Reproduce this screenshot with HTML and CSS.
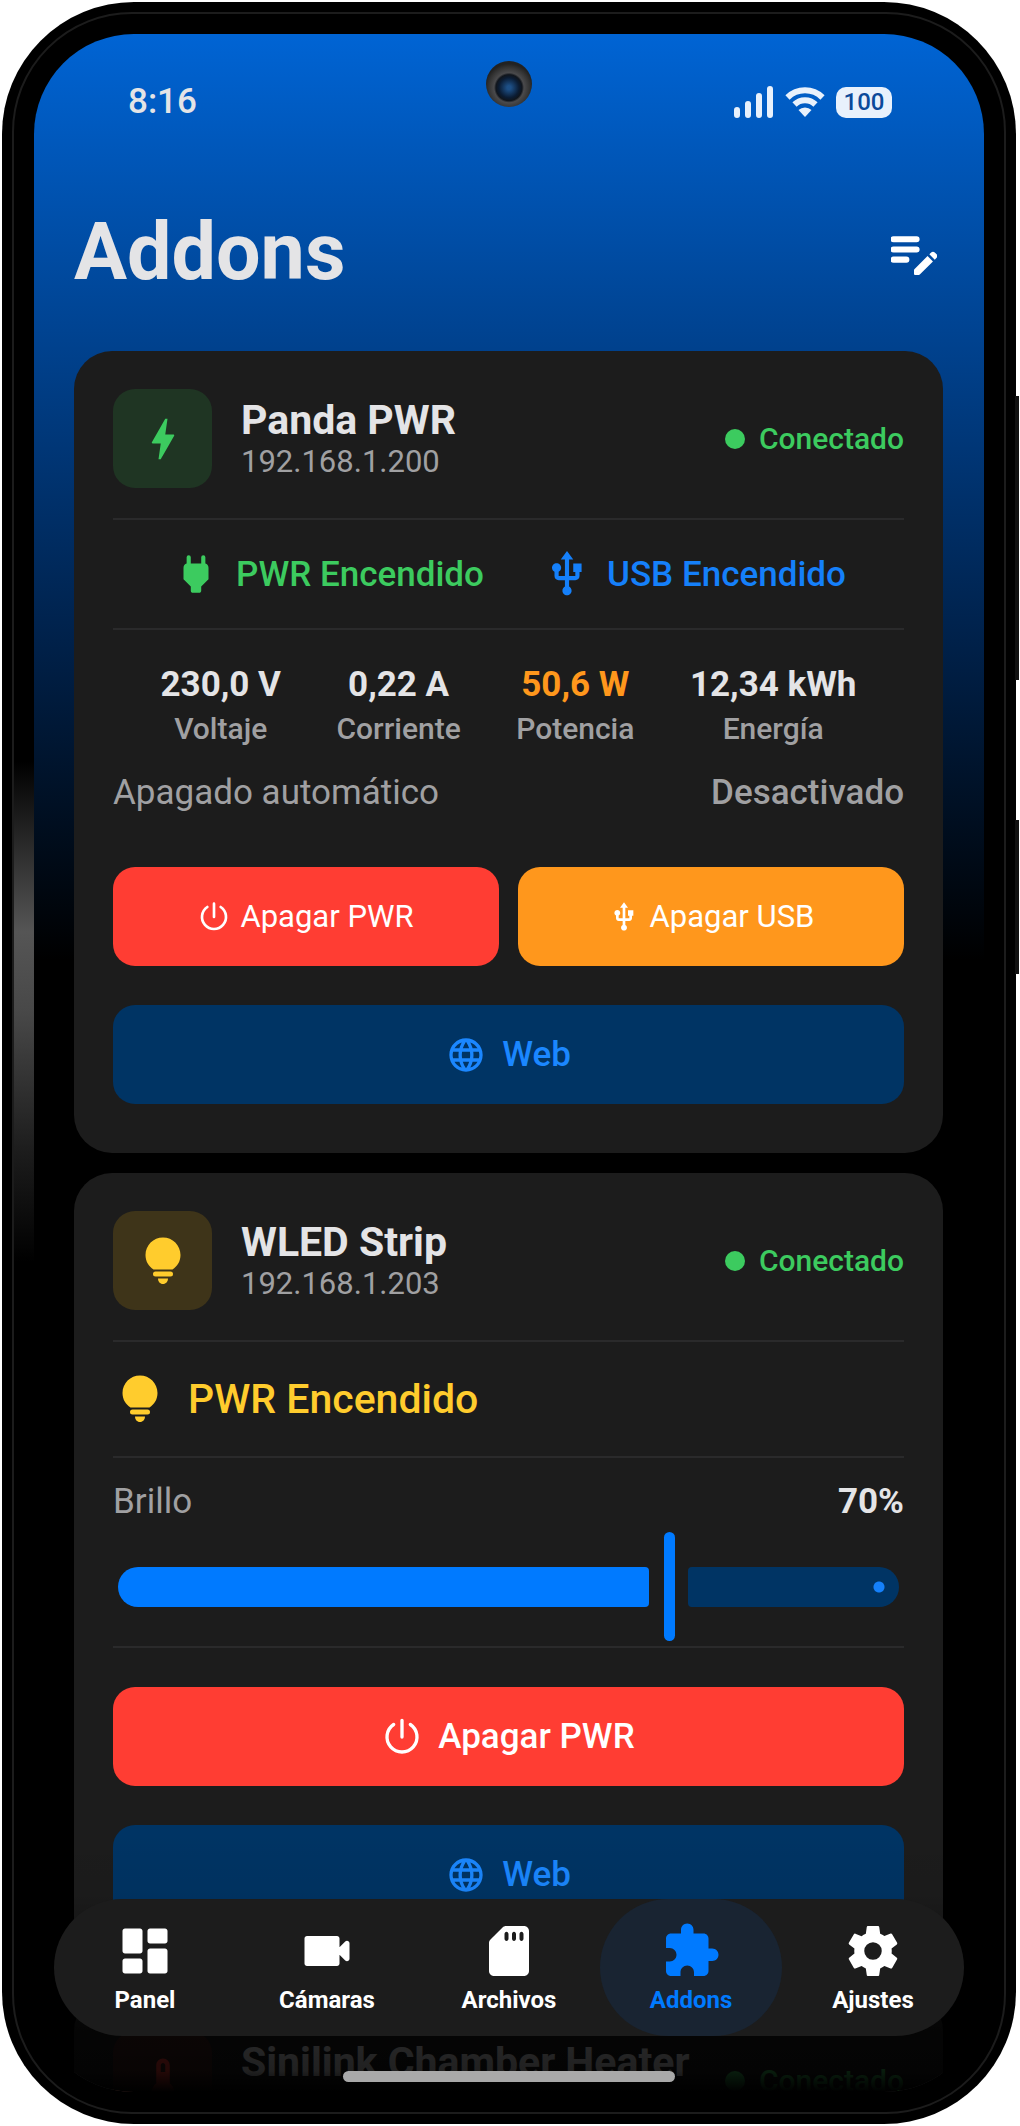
FILE: index.html
```html
<!DOCTYPE html>
<html lang="es">
<head>
  <meta charset="UTF-8" />
  <meta name="viewport" content="width=device-width, initial-scale=1.0"/>
  <title>Addons</title>
  <link rel="stylesheet" href="styles.css">
</head>
<body>
  <!-- shared icons -->
  <svg class="sprite" aria-hidden="true">
    <symbol id="i-usb" viewBox="0 0 24 24"><path d="M15 7v4h1v2h-3V5h2l-3-4-3 4h2v8H8v-2.070c.7-.37 1.200-1.080 1.200-1.930 0-1.210-.99-2.200-2.200-2.200-1.210 0-2.200.99-2.200 2.200 0 .85.5 1.560 1.200 1.930V13c0 1.110.89 2 2 2h3v3.050c-.71.37-1.200 1.100-1.200 1.950 0 1.220.99 2.200 2.200 2.200 1.210 0 2.200-.98 2.200-2.200 0-.85-.49-1.580-1.200-1.950V15h3c1.110 0 2-.89 2-2v-2h1V7z"/></symbol>
    <symbol id="i-power" viewBox="0 0 24 24"><path d="M12 2v10M7 4.500a9 9 0 1 0 10 0" fill="none" stroke="currentColor" stroke-width="2" stroke-linecap="round"/></symbol>
    <symbol id="i-web" viewBox="0 0 24 24"><path d="M11.990 2C6.470 2 2 6.480 2 12s4.470 10 9.990 10C17.520 22 22 17.520 22 12S17.520 2 11.990 2zm6.930 6h-2.950c-.32-1.250-.78-2.450-1.380-3.560 1.840.63 3.370 1.910 4.330 3.560zM12 4.040c.83 1.200 1.480 2.530 1.910 3.960h-3.820c.43-1.430 1.080-2.760 1.910-3.960zM4.260 14C4.100 13.360 4 12.690 4 12s.1-1.360.26-2h3.380c-.08.66-.14 1.320-.14 2 0 .68.06 1.340.14 2H4.260zm.82 2h2.950c.32 1.250.78 2.450 1.380 3.560-1.840-.63-3.370-1.900-4.330-3.560zm2.950-8H5.080c.96-1.660 2.490-2.930 4.330-3.560C8.810 5.550 8.350 6.750 8.030 8zM12 19.960c-.83-1.200-1.480-2.530-1.910-3.960h3.820c-.43 1.430-1.080 2.760-1.910 3.960zM14.340 14H9.660c-.09-.66-.16-1.320-.16-2 0-.68.07-1.350.16-2h4.680c.09.65.16 1.320.16 2 0 .68-.07 1.340-.16 2zm.25 5.560c.6-1.110 1.060-2.310 1.380-3.560h2.950c-.96 1.650-2.490 2.930-4.330 3.560zM16.360 14c.08-.66.14-1.320.14-2 0-.68-.06-1.340-.14-2h3.380c.16.64.26 1.310.26 2s-.1 1.360-.26 2h-3.380z"/></symbol>
    <symbol id="i-bulb" viewBox="0 0 36 48"><path d="M18 .5C8.400.5.500 8.300.500 18c0 6.500 3.300 11.400 8 14.500h19c4.700-3.100 8-8 8-14.500C35.500 8.300 27.600.5 18 .5zM10.500 34.500h15a2.500 2.500 0 0 1 0 5h-15a2.500 2.500 0 0 1 0-5zM13 41.500h10c0 3-2 5.500-5 5.500s-5-2.500-5-5.500z"/></symbol>
  </svg>

  <div class="phone">
    <div class="screen">
      <div class="status-bar">
        <span>8:16</span>
        <span class="camera"></span>
        <div class="status-icons">
          <svg width="40" height="32" viewBox="0 0 40 32"><path d="M3 24v5M14 18v11M25 10v19M36 3v26" stroke="currentColor" stroke-width="6" stroke-linecap="round"/></svg>
          <svg width="42" height="32" viewBox="0 0 42 32"><path d="M3.500 11.500a25 25 0 0 1 35 0M10.500 18.500a15 15 0 0 1 21 0" fill="none" stroke="currentColor" stroke-width="6"/><path d="M21 31l-6.500-7a9.500 9.500 0 0 1 13 0z"/></svg>
          <span class="battery">100</span>
        </div>
      </div>

      <header>
        <h1>Addons</h1>
        <button class="edit-btn" aria-label="Editar">
          <svg viewBox="3 3 18 18"><path d="M4 9.800h9a1.200 1.200 0 0 1 0 2.400H4a1.200 1.200 0 0 1 0-2.400zM4 5.800h9a1.200 1.200 0 0 1 0 2.400H4a1.200 1.200 0 0 1 0-2.400zM4 13.800h5a1.200 1.200 0 0 1 0 2.400H4a1.200 1.200 0 0 1 0-2.400zM18.010 12.870l.71-.71c.39-.39 1.020-.39 1.410 0l.71.71c.39.39.39 1.020 0 1.410l-.71.71-2.120-2.120zM17.300 13.580l-5.150 5.150a.5.5 0 0 0-.15.36v1.410c0 .28.22.5.5.5h1.410c.13 0 .26-.05.35-.15l5.160-5.150-2.120-2.120z"/></svg>
        </button>
      </header>

      <main>
        <section class="card">
          <div class="device">
            <div class="tile green">
              <svg width="54" height="54" viewBox="0 0 24 24"><path d="M11 21h-1l1-7H7.500c-.58 0-.57-.32-.38-.66.19-.34.05-.08.07-.12C8.480 10.940 10.420 7.540 13 3h1l-1 7h3.500c.49 0 .56.33.47.51l-.07.15C12.960 17.550 11 21 11 21z"/></svg>
            </div>
            <div class="device-info">
              <h2>Panda PWR</h2>
              <div class="ip">192.168.1.200</div>
            </div>
            <div class="state">Conectado</div>
          </div>
          <div class="power-row">
            <div class="power-item on">
              <svg viewBox="0 0 24 24"><path d="M16.500 7V4a1 1 0 0 0-2 0v3h-5V4a1 1 0 0 0-2 0v3C6.600 7.200 6 8 6 9v5.500L9.500 18v2c0 .6.400 1 1 1h3c.6 0 1-.4 1-1v-2l3.500-3.500V9c0-1-.6-1.800-1.500-2z"/></svg>
              PWR Encendido
            </div>
            <div class="power-item usb">
              <svg><use href="#i-usb"/></svg>
              USB Encendido
            </div>
          </div>
          <div class="stats">
            <div class="stat"><div class="value">230,0 V</div><div class="name">Voltaje</div></div>
            <div class="stat"><div class="value">0,22 A</div><div class="name">Corriente</div></div>
            <div class="stat"><div class="value orange">50,6 W</div><div class="name">Potencia</div></div>
            <div class="stat"><div class="value">12,34 kWh</div><div class="name">Energía</div></div>
          </div>
          <div class="auto-off">
            <span>Apagado automático</span>
            <strong>Desactivado</strong>
          </div>
          <div class="buttons">
            <button class="btn small red"><svg><use href="#i-power"/></svg>Apagar PWR</button>
            <button class="btn small amber"><svg><use href="#i-usb"/></svg>Apagar USB</button>
          </div>
          <button class="btn blue"><svg><use href="#i-web"/></svg>Web</button>
        </section>

        <section class="card">
          <div class="device">
            <div class="tile yellow">
              <svg width="36" height="48"><use href="#i-bulb"/></svg>
            </div>
            <div class="device-info">
              <h2>WLED Strip</h2>
              <div class="ip">192.168.1.203</div>
            </div>
            <div class="state">Conectado</div>
          </div>
          <div class="light-row">
            <svg width="54" height="48"><use href="#i-bulb"/></svg>
            PWR Encendido
          </div>
          <div class="brightness">
            <div class="brightness-label">
              <label for="brillo">Brillo</label>
              <output for="brillo">70%</output>
            </div>
            <div class="slider" style="--level: 70.6%">
              <div class="track"><span class="fill"></span><span class="rest"></span></div>
              <input type="range" id="brillo" min="0" max="255" value="180">
            </div>
          </div>
          <button class="btn red"><svg><use href="#i-power"/></svg>Apagar PWR</button>
          <button class="btn blue"><svg><use href="#i-web"/></svg>Web</button>
        </section>

        <section class="card">
          <div class="device">
            <div class="tile heat">
              <svg width="54" height="54" viewBox="0 0 24 24"><path d="M15 13V5c0-1.660-1.340-3-3-3S9 3.340 9 5v8c-1.210.91-2 2.370-2 4 0 2.760 2.240 5 5 5s5-2.240 5-5c0-1.630-.79-3.090-2-4zm-4-8c0-.55.45-1 1-1s1 .45 1 1v3h-2V5z"/></svg>
            </div>
            <div class="device-info">
              <h2>Sinilink Chamber Heater</h2>
            </div>
            <div class="state">Conectado</div>
          </div>
        </section>
      </main>

      <div class="fade"></div>
      <nav>
        <a href="#panel">
          <svg viewBox="0 0 24 24"><path d="M4 13h6c.55 0 1-.45 1-1V4c0-.55-.45-1-1-1H4c-.55 0-1 .45-1 1v8c0 .55.45 1 1 1zm0 8h6c.55 0 1-.45 1-1v-4c0-.55-.45-1-1-1H4c-.55 0-1 .45-1 1v4c0 .55.45 1 1 1zm10 0h6c.55 0 1-.45 1-1v-8c0-.55-.45-1-1-1h-6c-.55 0-1 .45-1 1v8c0 .55.45 1 1 1zM13 4v4c0 .55.45 1 1 1h6c.55 0 1-.45 1-1V4c0-.55-.45-1-1-1h-6c-.55 0-1 .45-1 1z"/></svg>
          Panel
        </a>
        <a href="#camaras">
          <svg viewBox="0 0 24 24"><path d="M17 10.500V7c0-.55-.45-1-1-1H4c-.55 0-1 .45-1 1v10c0 .55.45 1 1 1h12c.55 0 1-.45 1-1v-3.500l2.290 2.290c.63.63 1.710.18 1.710-.71V8.910c0-.89-1.080-1.340-1.710-.71L17 10.500z"/></svg>
          Cámaras
        </a>
        <a href="#archivos">
          <svg viewBox="0 0 24 24"><path fill-rule="evenodd" d="M18 2h-7.170c-.53 0-1.040.21-1.420.59L4.600 7.420c-.37.37-.6.88-.6 1.400V20c0 1.100.9 2 2 2h12c1.100 0 2-.9 2-2V4c0-1.100-.9-2-2-2zM11 8c-.45 0-.8-.45-.8-1V5.300c0-.55.35-1 .8-1s.8.45.8 1V7c0 .55-.35 1-.8 1zm3 0c-.45 0-.8-.45-.8-1V5.300c0-.55.35-1 .8-1s.8.45.8 1V7c0 .55-.35 1-.8 1zm3 0c-.45 0-.8-.45-.8-1V5.300c0-.55.35-1 .8-1s.8.45.8 1V7c0 .55-.35 1-.8 1z"/></svg>
          Archivos
        </a>
        <a href="#addons" class="active" aria-current="page">
          <svg viewBox="0 0 24 24"><path d="M20.500 11H19V7c0-1.100-.9-2-2-2h-4V3.500C13 2.120 11.880 1 10.500 1S8 2.120 8 3.500V5H4c-1.100 0-1.990.9-1.990 2v3.800H3.500c1.490 0 2.700 1.210 2.700 2.700s-1.210 2.700-2.700 2.700H2V20c0 1.100.9 2 2 2h3.800v-1.500c0-1.490 1.210-2.700 2.700-2.700 1.490 0 2.700 1.210 2.700 2.700V22H17c1.100 0 2-.9 2-2v-4h1.500c1.380 0 2.500-1.120 2.500-2.500S21.880 11 20.500 11z"/></svg>
          Addons
        </a>
        <a href="#ajustes">
          <svg viewBox="0 0 24 24"><path d="M19.500 12c0-.34-.03-.68-.07-1l2.110-1.650c.19-.15.24-.42.12-.64l-2-3.460c-.12-.22-.39-.3-.61-.22l-2.490 1a7.300 7.300 0 0 0-1.690-.98l-.38-2.650A.49.49 0 0 0 14 2h-4c-.25 0-.46.18-.49.42l-.38 2.650c-.61.25-1.170.59-1.690.98l-2.490-1c-.23-.09-.49 0-.61.22l-2 3.460c-.13.22-.07.49.12.64L4.570 11a7.900 7.900 0 0 0 0 2l-2.110 1.650c-.19.15-.24.42-.12.64l2 3.460c.12.22.39.3.61.22l2.490-1c.52.4 1.080.73 1.690.98l.38 2.650c.03.24.24.42.49.42h4c.25 0 .46-.18.49-.42l.38-2.650c.61-.25 1.170-.59 1.690-.98l2.490 1c.23.09.49 0 .61-.22l2-3.460c.12-.22.07-.49-.12-.64L19.430 13c.04-.32.07-.66.07-1zM12 15.500a3.500 3.500 0 1 1 0-7 3.500 3.500 0 0 1 0 7z"/></svg>
          Ajustes
        </a>
      </nav>
      <div class="home-bar"></div>
    </div>
  </div>
</body>
</html>
```
FILE: styles.css
```css
* {
  margin: 0;
  padding: 0;
  box-sizing: border-box;
}

body {
  font-family: Roboto, 'Liberation Sans', sans-serif;
  background: #fff;
  color: #e4e4e6;
  height: 100vh;
  padding: 2px 4px 2px 2px;
}

svg {
  fill: currentColor;
  flex-shrink: 0;
}

button {
  font-family: inherit;
  border: none;
  background: none;
  color: inherit;
  cursor: pointer;
}

.sprite {
  position: absolute;
  width: 0;
  height: 0;
}

/* phone body */
.phone {
  position: relative;
  height: 100%;
  padding: 32px;
  background: #000;
  border-radius: 132px;
}

/* metal rim */
.phone::before {
  content: "";
  position: absolute;
  inset: 10px;
  border: 2px solid #1c1c1c;
  border-radius: 120px;
}

/* side buttons and edge reflection */
.phone::after {
  content: "";
  position: absolute;
  top: 394px;
  right: -3px;
  width: 4px;
  height: 578px;
  background: linear-gradient(#111 0 284px, transparent 284px 424px, #111 424px);
}

.screen::before {
  content: "";
  position: absolute;
  left: 12px;
  top: 760px;
  width: 20px;
  height: 500px;
  background: linear-gradient(#000, #555 34%, #484848 50%, #1c1c1c 78%, #000);
}

.screen {
  height: 100%;
  overflow: hidden;
  border-radius: 100px;
  background: linear-gradient(#0064d4, #00428f 306px, #00214a 606px, #000 926px);
}

.status-bar {
  display: flex;
  justify-content: space-between;
  align-items: center;
  padding: 46px 92px 0 94px;
  font-size: 35px;
  font-weight: 500;
  line-height: 44px;
}

.camera {
  position: absolute;
  top: 59px;
  left: 50%;
  width: 46px;
  height: 46px;
  margin-left: -23px;
  border-radius: 50%;
  background: radial-gradient(circle at 50% 58%, #1d4f86 0 2px, #0b1c33 10px, #10151c 13px, #4a4a4c 15px, #353535 20px, #222 24px);
}

.status-icons {
  display: flex;
  align-items: center;
  gap: 10px;
  color: #e8f1fc;
}

.battery {
  width: 56px;
  height: 31px;
  border-radius: 10px;
  background: #e8f1fc;
  color: #0b4a9a;
  font-size: 24px;
  line-height: 31px;
  text-align: center;
}

header {
  display: flex;
  justify-content: space-between;
  align-items: center;
  padding: 81px 47px 52px 40px;
}

h1 {
  font-size: 79px;
  line-height: 94px;
  font-weight: 700;
}

.edit-btn {
  color: #fff;
}

.edit-btn svg {
  display: block;
  width: 46px;
  height: 46px;
}

main {
  display: grid;
  gap: 20px;
  padding: 0 41px 0 40px;
}

.card {
  background: #1c1c1c;
  border-radius: 38px;
  padding: 38px 39px 49px;
}

.device {
  display: flex;
  align-items: center;
  padding-bottom: 30px;
  border-bottom: 2px solid #2a2a2b;
}

.tile {
  display: flex;
  justify-content: center;
  align-items: center;
  width: 99px;
  height: 99px;
  border-radius: 22px;
}

.tile.green {
  background: #1f3523;
  color: #3ccb5f;
}

.tile.yellow {
  background: #3e3419;
  color: #ffcc2d;
}

.tile.heat {
  background: #3d201d;
  color: #ff3d33;
}

.device-info {
  min-height: 84px;
  margin-left: 29px;
}

h2 {
  font-size: 41px;
  line-height: 46px;
  font-weight: 700;
}

.ip {
  font-size: 31px;
  line-height: 38px;
  color: #a0a0a2;
}

.state {
  display: flex;
  align-items: center;
  gap: 14px;
  margin-left: auto;
  font-size: 30px;
  font-weight: 500;
  color: #3ccb5f;
}

.state::before {
  content: "";
  width: 20px;
  height: 20px;
  border-radius: 50%;
  background: currentColor;
}

.power-row {
  display: flex;
  justify-content: space-evenly;
  height: 110px;
  border-bottom: 2px solid #2a2a2b;
}

.power-item {
  display: flex;
  align-items: center;
  gap: 15px;
  font-size: 35px;
  font-weight: 500;
}

.power-item svg {
  width: 50px;
  height: 50px;
}

.on {
  color: #3ccb5f;
}

.usb {
  color: #1580fa;
}

.stats {
  display: flex;
  justify-content: space-evenly;
  gap: 8px;
  padding-top: 33px;
  text-align: center;
}

.value {
  font-size: 35px;
  line-height: 44px;
  font-weight: 700;
  margin-bottom: 4px;
}

.orange {
  color: #ff971c;
}

.name {
  font-size: 30px;
  line-height: 36px;
  font-weight: 500;
  color: #a0a0a2;
}

.auto-off {
  display: flex;
  justify-content: space-between;
  margin: 24px 0 52px;
  font-size: 35px;
  line-height: 44px;
  color: #a0a0a2;
}

.auto-off strong {
  font-weight: 500;
}

.buttons {
  display: grid;
  grid-template-columns: 1fr 1fr;
  gap: 19px;
}

.btn {
  display: flex;
  justify-content: center;
  align-items: center;
  gap: 16px;
  width: 100%;
  height: 99px;
  border-radius: 22px;
  font-size: 35px;
  font-weight: 500;
  color: #fff;
}

.btn svg {
  width: 40px;
  height: 40px;
}

.btn.small {
  gap: 10px;
  font-size: 31px;
  font-weight: 400;
}

.btn.small svg {
  width: 32px;
  height: 32px;
}

.btn.blue {
  margin-top: 39px;
  background: #003464;
  color: #1b87ff;
}

.red {
  background: #ff3d33;
}

.amber {
  background: #ff971c;
}

.light-row {
  display: flex;
  align-items: center;
  gap: 21px;
  height: 116px;
  border-bottom: 2px solid #2a2a2b;
  font-size: 41px;
  font-weight: 500;
  color: #ffcc2d;
}

.brightness {
  padding: 22px 0 5px;
  margin-bottom: 39px;
  border-bottom: 2px solid #2a2a2b;
}

.brightness-label {
  display: flex;
  justify-content: space-between;
  font-size: 35px;
  line-height: 44px;
}

.brightness-label label {
  color: #a0a0a2;
}

.brightness-label output {
  font-weight: 700;
}

.slider {
  display: grid;
  align-items: center;
  height: 109px;
  margin-top: 8px;
}

.track,
.slider input {
  grid-area: 1 / 1;
}

.track {
  display: flex;
  gap: 39px;
  height: 40px;
  margin: 0 5px;
}

.fill {
  width: calc(var(--level) - 20px);
  border-radius: 20px 4px 4px 20px;
  background: #007aff;
}

/* unfilled part ends with a small stop mark */
.rest {
  flex: 1;
  border-radius: 4px 20px 20px 4px;
  background: radial-gradient(circle at calc(100% - 20px) 50%, #1580fa 5px, #003464 6px);
}

.slider input {
  appearance: none;
  width: 100%;
  height: 109px;
  background: none;
}

.slider input::-webkit-slider-thumb {
  appearance: none;
  width: 11px;
  height: 109px;
  border-radius: 6px;
  background: #007aff;
}

/* content darkens towards the bottom of the screen */
.fade {
  position: absolute;
  left: 32px;
  right: 32px;
  bottom: 32px;
  height: 260px;
  border-radius: 0 0 100px 100px;
  background: linear-gradient(transparent, rgba(0, 0, 0, 0.05) 25%, rgba(0, 0, 0, 0.82) 76%, rgba(0, 0, 0, 0.86) 92%, #000);
}

nav {
  position: absolute;
  left: 52px;
  right: 52px;
  bottom: 88px;
  display: grid;
  grid-template-columns: repeat(5, 1fr);
  border-radius: 69px;
  background: #1c1c1c;
}

nav a {
  display: flex;
  flex-direction: column;
  align-items: center;
  padding: 22px 0 17px;
  border-radius: 69px;
  color: #fff;
  font-size: 24px;
  font-weight: 700;
  line-height: 38px;
  text-decoration: none;
}

nav svg {
  width: 60px;
  height: 60px;
}

nav .active {
  background: #192432;
  color: #007aff;
}

.home-bar {
  position: absolute;
  left: 50%;
  bottom: 42px;
  width: 332px;
  height: 11px;
  margin-left: -166px;
  border-radius: 6px;
  background: #a9a9a9;
}
```
